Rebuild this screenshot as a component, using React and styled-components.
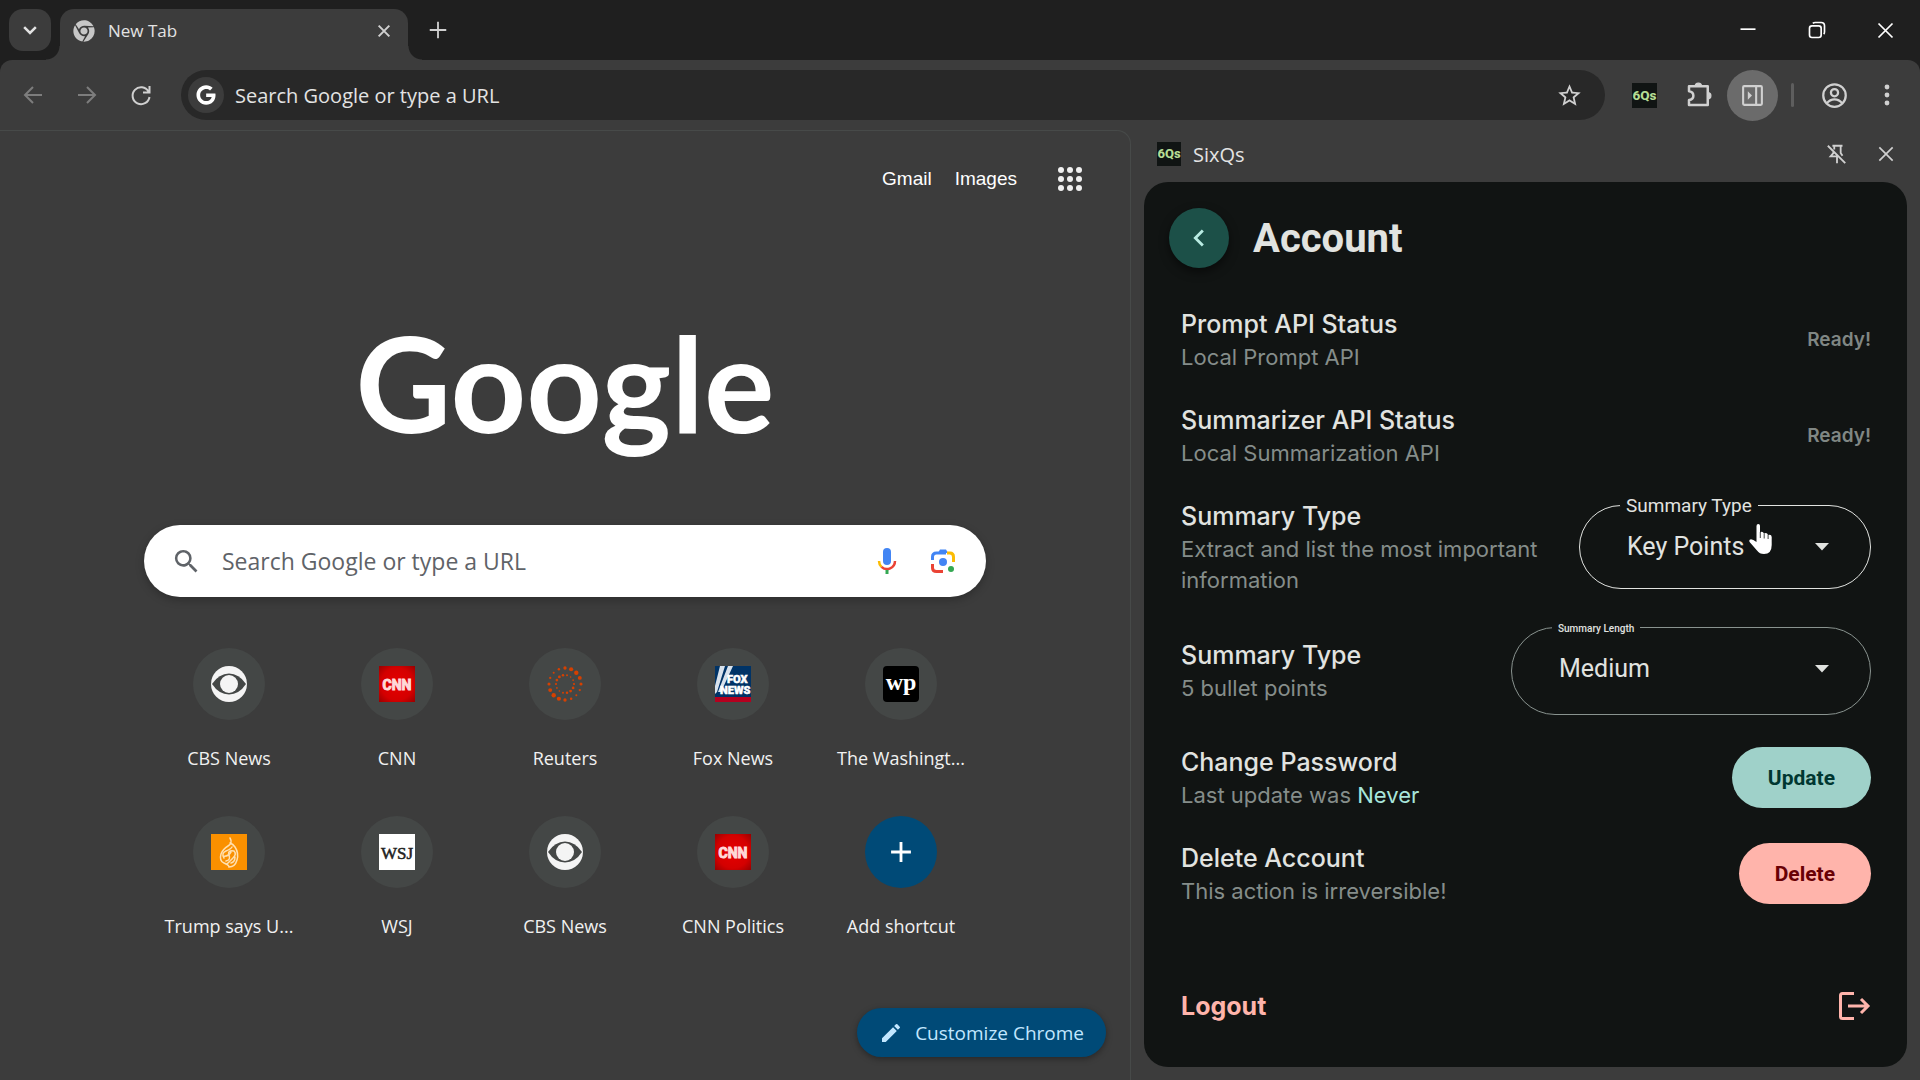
import React, { useState } from 'react';
import styled, { createGlobalStyle, css } from 'styled-components';
import { FaChrome, FaGoogle } from 'react-icons/fa';
import { MdAdd, MdEdit, MdSearch, MdStarOutline, MdChevronLeft } from 'react-icons/md';

const GlobalStyle = createGlobalStyle`
  * {
    box-sizing: border-box;
  }
  body {
    margin: 0;
    background: #3c3c3c;
    color: #e3e3e3;
    font-family: "Open Sans", "Noto Sans", sans-serif;
    font-size: 18px;
  }
  button, input, select {
    font: inherit;
    color: inherit;
  }
  svg {
    display: block;
    flex: none;
  }
`;

const Window = styled.div`
  display: flex;
  flex-direction: column;
  min-height: 100vh;
`;

/* ---------- tab strip ---------- */

const TabStrip = styled.div`
  display: flex;
  align-items: center;
  height: 60px;
  padding-left: 9px;
  background: #1f1f1f;
`;

const PlainButton = styled.button`
  display: flex;
  align-items: center;
  justify-content: center;
  flex: none;
  width: ${({ $width }) => $width || 48}px;
  height: ${({ $height }) => $height || 48}px;
  padding: 0;
  border: 0;
  border-radius: 50%;
  background: ${({ $active }) => ($active ? '#6b6b6b' : 'transparent')};
  color: ${({ $dim }) => ($dim ? '#7d7d7d' : '#d0d0d0')};
`;

const TabSearchButton = styled(PlainButton)`
  border-radius: 14px;
  background: #3c3c3c;
  color: #e3e3e3;
`;

const Tab = styled.div`
  position: relative;
  display: flex;
  align-items: center;
  align-self: flex-end;
  gap: 13px;
  width: 348px;
  height: 51px;
  margin-left: 9px;
  padding: 0 7px 8px 13px;
  border-radius: 14px 14px 0 0;
  background: #3c3c3c;
  color: #e3e3e3;

  &::before,
  &::after {
    content: "";
    position: absolute;
    bottom: 0;
    width: 14px;
    height: 14px;
  }
  &::before {
    right: 100%;
    background: radial-gradient(circle at 0 0, transparent 13px, #3c3c3c 14px);
  }
  &::after {
    left: 100%;
    background: radial-gradient(circle at 100% 0, transparent 13px, #3c3c3c 14px);
  }
`;

const TabTitle = styled.span`
  flex: 1;
  font-size: 17px;
`;

const NewTabButton = styled(PlainButton)`
  margin-left: 6px;
`;

const WindowControls = styled.div`
  display: flex;
  margin-left: auto;

  ${PlainButton} {
    color: #fff;
  }
`;

/* ---------- toolbar ---------- */

const ToolbarBack = styled.div`
  background: #1f1f1f;
`;

const Toolbar = styled.div`
  display: flex;
  align-items: center;
  height: 70px;
  padding: 0 8px 0 6px;
  border-radius: 12px 12px 0 0;
  background: #3c3c3c;
`;

const Omnibox = styled.div`
  display: flex;
  align-items: center;
  flex: 1;
  height: 50px;
  margin: 0 12px 0 13px;
  padding: 0 12px 0 7px;
  border-radius: 25px;
  background: #282828;
`;

const SiteBadge = styled.span`
  display: flex;
  align-items: center;
  justify-content: center;
  width: 36px;
  height: 36px;
  border-radius: 50%;
  background: #3c3c3c;
  color: #fff;
`;

const AddressInput = styled.input`
  flex: 1;
  min-width: 0;
  padding: 0 11px;
  border: 0;
  outline: 0;
  background: transparent;
  font-size: 20px;

  &::placeholder {
    color: #e3e3e3;
    opacity: 1;
  }
`;

const Divider = styled.span`
  width: 3px;
  height: 24px;
  margin: 0 16px 0 13px;
  border-radius: 2px;
  background: #5e5e5e;
`;

const MenuButton = styled(PlainButton)`
  margin-left: 4px;
`;

/* ---------- new tab page ---------- */

const Main = styled.div`
  display: flex;
  flex: 1;
`;

const Page = styled.main`
  display: flex;
  flex-direction: column;
  align-items: center;
  flex: 1;
  min-width: 0;
  padding: 24px 24px 23px;
  border: solid #474a49;
  border-width: 1px 1px 0 0;
  border-radius: 0 14px 0 0;
`;

const PageNav = styled.nav`
  display: flex;
  align-items: center;
  align-self: flex-end;
  gap: 23px;
  height: 48px;
  padding-right: 6px;
`;

const NavLink = styled.a`
  color: #fff;
  font-family: "Liberation Sans", Arial, sans-serif;
  font-size: 19px;
  text-decoration: none;
`;

const Logo = styled.svg`
  width: 440px;
  height: 190px;
  margin: 92px 0 40px;
`;

const SearchBox = styled.form`
  display: flex;
  align-items: center;
  width: 100%;
  max-width: 842px;
  height: 72px;
  padding: 0 19px 0 27px;
  border-radius: 36px;
  background: #fff;
  color: #5f6368;
  box-shadow: 0 3px 8px rgba(0, 0, 0, 0.25);
`;

const SearchInput = styled(AddressInput)`
  padding: 0 20px;
  font-size: 23px;

  &::placeholder {
    color: #5f6368;
  }
`;

const Shortcuts = styled.div`
  display: grid;
  grid-template-columns: repeat(5, 168px);
  grid-auto-rows: 168px;
  margin-top: 51px;
`;

const Shortcut = styled.a`
  display: flex;
  flex-direction: column;
  align-items: center;
  gap: 24px;
  color: #f1f1f1;
  font-size: 18px;
  line-height: 28px;
  text-decoration: none;
  white-space: nowrap;
`;

const ShortcutIcon = styled.span`
  display: flex;
  align-items: center;
  justify-content: center;
  width: 72px;
  height: 72px;
  border-radius: 50%;
  background: ${({ $accent }) => ($accent ? '#004a77' : '#444746')};
  color: #fff;
`;

const CustomizeButton = styled.button`
  display: flex;
  align-items: center;
  align-self: flex-end;
  gap: 12px;
  height: 49px;
  margin-top: auto;
  padding: 0 22px;
  border: 0;
  border-radius: 25px;
  background: #004a77;
  color: #c2e7ff;
  font-size: 19px;
  box-shadow: 0 2px 6px rgba(0, 0, 0, 0.35);
`;

/* ---------- side panel ---------- */

const SidePanel = styled.aside`
  display: flex;
  flex-direction: column;
  flex: none;
  width: 789px;
  padding: 0 13px 13px;
`;

const SideHeader = styled.header`
  display: flex;
  align-items: center;
  gap: 12px;
  height: 52px;
  padding: 0 2px 4px 13px;
`;

const SideTitle = styled.span`
  flex: 1;
  font-size: 20px;
  font-weight: 500;
`;

const Panel = styled.section`
  display: flex;
  flex-direction: column;
  flex: 1;
  padding: 26px 36px 31px 37px;
  border-radius: 24px;
  background: #111413;
  color: #e1e3e0;
  font-family: Inter, sans-serif;
`;

const PanelHeader = styled.div`
  display: flex;
  align-items: center;
  gap: 24px;
  margin: 0 0 38px -12px;
`;

const BackButton = styled(PlainButton)`
  background: #1c5048;
  color: #b9ece3;
  box-shadow: 0 4px 10px rgba(0, 0, 0, 0.5);
`;

const Heading = styled.h1`
  margin: 0;
  font-family: Roboto, sans-serif;
  font-size: 40px;
  font-weight: 700;
`;

const Settings = styled.div`
  display: flex;
  flex-direction: column;
  gap: 29px;
`;

const Row = styled.div`
  display: flex;
  align-items: center;
  justify-content: space-between;
  gap: 24px;
`;

const RowTitle = styled.h2`
  margin: 0;
  font-size: 25px;
  font-weight: 500;
  line-height: 36px;
`;

const RowText = styled.p`
  margin: 0;
  color: #858d8a;
  font-size: 22px;
  line-height: 31px;
`;

const Highlight = styled.span`
  color: #a8e6db;
`;

const Status = styled.span`
  color: #808784;
  font-size: 19px;
  font-weight: 600;
`;

const Field = styled.fieldset`
  position: relative;
  flex: none;
  width: ${({ $width }) => $width}px;
  height: ${({ $height }) => $height}px;
  margin: 0;
  padding: 0 0 0 40px;
  border: 1px solid ${({ $hover }) => ($hover ? '#e1e3e0' : '#89938f')};
  border-radius: 44px;
  font-family: Roboto, sans-serif;
`;

/* zero line height keeps the legend centred on the border */
const FieldLegend = styled.legend`
  padding: ${({ $small }) => ($small ? '4px 6px 0' : '0 6px')};
  line-height: 0;
  ${({ $small }) => css`
    font-size: ${$small ? 10 : 19}px;
    font-weight: ${$small ? 500 : 400};
  `}
`;

const FieldControl = styled.div`
  display: grid;
  align-items: center;
  height: 100%;
  padding-bottom: ${({ $small }) => ($small ? 6 : 0)}px;

  > * {
    grid-area: 1 / 1;
  }
  svg {
    justify-self: end;
    margin-right: 41px;
    pointer-events: none;
  }
`;

const Select = styled.select`
  width: 100%;
  height: 100%;
  padding: 0 60px 0 7px;
  border: 0;
  outline: 0;
  appearance: none;
  background: transparent;
  font-size: 25px;
  line-height: 36px;
`;

const Pointer = styled.svg`
  position: absolute;
  top: 18px;
  left: 169px;
  pointer-events: none;
`;

const ActionButton = styled.button`
  height: 61px;
  margin: 3px 0;
  padding: 0 36px;
  border: 0;
  border-radius: 31px;
  background: ${({ $danger }) => ($danger ? '#ffb4ab' : '#9fd1c9')};
  color: ${({ $danger }) => ($danger ? '#690005' : '#003731')};
  font-family: Roboto, sans-serif;
  font-size: 21px;
  font-weight: 700;
`;

const LogoutButton = styled.button`
  display: flex;
  align-items: center;
  justify-content: space-between;
  height: 60px;
  margin-top: auto;
  padding: 0;
  border: 0;
  background: transparent;
  color: #ffb4ab;
  font-size: 25px;
  font-weight: 700;
`;

/* ---------- drawings ---------- */

const StrokeIcon = ({ size = 24, width = 2, children }) => (
  <svg width={size} height={size} viewBox="0 0 24 24" fill="none" stroke="currentColor" strokeWidth={width} aria-hidden="true">
    {children}
  </svg>
);

const Cross = ({ size = 20, width = 2 }) => (
  <StrokeIcon size={size} width={width}>
    <path d="M4 4 20 20M20 4 4 20" />
  </StrokeIcon>
);

const SixQsIcon = ({ size }) => (
  <svg width={size} height={size} viewBox="0 0 24 24" aria-hidden="true">
    <rect width="24" height="24" fill="#101413" />
    <text x="12" y="16" textAnchor="middle" fill="#b5dc94" fontFamily="Roboto, sans-serif" fontWeight="800" fontSize="13">6Qs</text>
  </svg>
);

const CbsIcon = () => (
  <svg width="36" height="36" viewBox="0 0 36 36" aria-hidden="true">
    <circle cx="18" cy="18" r="18" fill="#f4f4f4" />
    <path d="M1 18Q8 7.500 18 7.500T35 18Q28 28.500 18 28.500T1 18Z" fill="#444746" />
    <circle cx="18" cy="18" r="9" fill="#f4f4f4" />
  </svg>
);

const CnnIcon = () => (
  <svg width="36" height="36" viewBox="0 0 36 36" aria-hidden="true">
    <defs>
      <radialGradient id="cnn-red" r="0.75">
        <stop offset="0" stopColor="#e60000" />
        <stop offset="0.6" stopColor="#d40000" />
        <stop offset="1" stopColor="#8e0000" />
      </radialGradient>
    </defs>
    <rect width="36" height="36" fill="url(#cnn-red)" />
    <text x="18" y="24" textAnchor="middle" fill="#ffd9d9" stroke="#ffd9d9" strokeWidth="1" fontFamily="Roboto, sans-serif" fontWeight="700" fontSize="14">CNN</text>
  </svg>
);

const ring = (count, radius, min, max, phase) =>
  Array.from({ length: count }).map((_, i) => {
    const angle = (i / count) * Math.PI * 2;
    const weight = (Math.cos((angle - phase) * 2) + 1) / 2;
    return (
      <circle
        key={`${radius}-${i}`}
        cx={18 + Math.cos(angle) * radius}
        cy={18 + Math.sin(angle) * radius}
        r={min + (max - min) * weight}
      />
    );
  });

const ReutersIcon = () => (
  <svg width="36" height="36" viewBox="0 0 36 36" fill="#d64000" aria-hidden="true">
    {ring(16, 16, 1, 2.2, 2.3)}
    {ring(14, 9, 0.8, 1.4, 0.8)}
  </svg>
);

const FoxIcon = () => (
  <svg width="36" height="36" viewBox="0 0 36 36" aria-hidden="true">
    <rect width="36" height="36" fill="#003366" />
    <path d="M5 0H10L2 26 0 28V20ZM13 0H18L6 26H3Z" fill="#d8e2ec" />
    <rect y="31" width="36" height="5" fill="#b5001f" />
    <g fill="#fff" stroke="#fff" fontFamily="Roboto, sans-serif" fontWeight="900" strokeWidth="0.500">
      <text x="12" y="17" fontSize="11">FOX</text>
      <text x="5" y="28" fontSize="11">NEWS</text>
    </g>
  </svg>
);

const WpIcon = () => (
  <svg width="36" height="36" viewBox="0 0 36 36" aria-hidden="true">
    <rect width="36" height="36" rx="4" fill="#000" />
    <text x="18" y="24" textAnchor="middle" fill="#fff" fontFamily="Liberation Serif, serif" fontWeight="700" fontSize="24">wp</text>
  </svg>
);

const AlJazeeraIcon = () => (
  <svg width="36" height="36" viewBox="0 0 36 36" aria-hidden="true">
    <rect width="36" height="36" fill="#fa9000" />
    <g fill="none" stroke="#ffe0b0" strokeWidth="1.500" strokeLinecap="round">
      <path d="M19 4Q22 9 17 12T10 20Q8 27 13 29T18 33Q24 33 26 26T24 13Q22 10 19 9" />
      <path d="M13 24Q10 19 15 17T21 13M15 27Q20 26 18 21T23 17Q26 20 22 24T16 30M12 22Q17 23 20 18M20 29Q24 28 24 23" />
    </g>
  </svg>
);

const WsjIcon = () => (
  <svg width="36" height="36" viewBox="0 0 36 36" aria-hidden="true">
    <rect width="36" height="36" fill="#fff" />
    <text x="18" y="25" textAnchor="middle" fill="#222" stroke="#222" strokeWidth="0.500" fontFamily="Liberation Serif, serif" fontSize="17">WSJ</text>
  </svg>
);

const MicIcon = () => (
  <svg width="30" height="30" viewBox="0 0 30 30" fill="none" aria-hidden="true">
    <rect x="11" y="2" width="8" height="17" rx="4" fill="#4285f4" />
    <path d="M7 15A8 8 0 0 0 9.500 20.800" stroke="#fbbc04" strokeWidth="2.500" />
    <path d="M9.500 20.800A8 8 0 0 0 23 15" stroke="#ea4335" strokeWidth="2.500" />
    <path d="M15 24V28" stroke="#34a853" strokeWidth="3" />
  </svg>
);

const LensIcon = () => (
  <svg width="26" height="26" viewBox="0 0 26 26" fill="none" strokeWidth="3" aria-hidden="true">
    <path d="M2.500 12V9Q2.500 5 6.500 5H16" stroke="#4285f4" />
    <path d="M8 5 10 1.500H16L18 5Z" fill="#4285f4" />
    <path d="M17 5H20Q23.500 5 23.500 9V14" stroke="#fbbc04" />
    <path d="M2.500 16V20Q2.500 23.500 6.500 23.500H13" stroke="#ea4335" />
    <circle cx="13" cy="14" r="4" fill="#4285f4" />
    <circle cx="21" cy="21" r="3" fill="#34a853" />
  </svg>
);

const AppsIcon = () => (
  <svg width="25" height="25" viewBox="0 0 25 25" fill="#f1f1f1" aria-hidden="true">
    {[3, 12, 21].map((cy) => [3, 12, 21].map((cx) => <circle key={`${cx}-${cy}`} cx={cx} cy={cy} r="3" />))}
  </svg>
);

const DropArrow = () => (
  <svg width="14" height="8" viewBox="0 0 14 8" fill="currentColor" aria-hidden="true">
    <path d="M0 0H14L7 7.500Z" />
  </svg>
);

const HandPointer = () => (
  <Pointer width="24" height="31" viewBox="0 0 24 31" aria-hidden="true">
    <path
      d="M7.500 2Q7.500 0 9.300 0T11 2V8.500Q13.500 6.500 15 9.500 18 8 19 11 22.500 10 22.700 13V21Q22.700 30 15 30 10.500 30 8 26.500L.6 18Q-.5 15.500 2 15.300 4 15.300 7.500 18Z"
      fill="#fff"
    />
    <path d="M11.300 8V14M15.200 9.500V14.500M19.100 11V15" stroke="#111413" strokeWidth="0.800" />
  </Pointer>
);

const shortcuts = [
  { id: 1, name: 'CBS News', icon: <CbsIcon /> },
  { id: 2, name: 'CNN', icon: <CnnIcon /> },
  { id: 3, name: 'Reuters', icon: <ReutersIcon /> },
  { id: 4, name: 'Fox News', icon: <FoxIcon /> },
  { id: 5, name: 'The Washingt...', icon: <WpIcon /> },
  { id: 6, name: 'Trump says U...', icon: <AlJazeeraIcon /> },
  { id: 7, name: 'WSJ', icon: <WsjIcon /> },
  { id: 8, name: 'CBS News', icon: <CbsIcon /> },
  { id: 9, name: 'CNN Politics', icon: <CnnIcon /> },
  { id: 10, name: 'Add shortcut', icon: <MdAdd size={34} />, accent: true },
];

const SettingRow = ({ title, text, children }) => (
  <Row>
    <div>
      <RowTitle>{title}</RowTitle>
      <RowText>{text}</RowText>
    </div>
    {children}
  </Row>
);

const SelectField = ({ id, label, options, value, onChange, width, height, small, hover }) => (
  <Field $width={width} $height={height} $hover={hover}>
    <FieldLegend $small={small}>
      <label htmlFor={id}>{label}</label>
    </FieldLegend>
    <FieldControl $small={small}>
      <Select id={id} value={value} onChange={(e) => onChange(e.target.value)}>
        {options.map((option) => <option key={option}>{option}</option>)}
      </Select>
      <DropArrow />
    </FieldControl>
    {hover && <HandPointer />}
  </Field>
);

const Browser = () => (
  <>
    <TabStrip>
      <TabSearchButton $width={42} $height={42} aria-label="Search tabs">
        <StrokeIcon size={20} width={3}><path d="M5 8.500 12 15.500 19 8.500" /></StrokeIcon>
      </TabSearchButton>
      <Tab>
        <FaChrome size={22} color="#c7c7c7" />
        <TabTitle>New Tab</TabTitle>
        <PlainButton $width={34} $height={34} aria-label="Close tab"><Cross size={16} width={3} /></PlainButton>
      </Tab>
      <NewTabButton aria-label="New tab">
        <StrokeIcon size={22} width={2}><path d="M12 3V21M3 12H21" /></StrokeIcon>
      </NewTabButton>
      <WindowControls>
        <PlainButton $width={69} aria-label="Minimize">
          <StrokeIcon size={20}><path d="M3 11H21" /></StrokeIcon>
        </PlainButton>
        <PlainButton $width={69} aria-label="Restore">
          <StrokeIcon size={20} width={2}>
            <rect x="3" y="7" width="14" height="14" rx="3" />
            <path d="M7 4Q8 3 10 3H17Q21 3 21 7V14Q21 16 20 17" />
          </StrokeIcon>
        </PlainButton>
        <PlainButton $width={69} aria-label="Close window"><Cross size={21} /></PlainButton>
      </WindowControls>
    </TabStrip>
    <ToolbarBack>
      <Toolbar>
        <PlainButton $width={54} $dim aria-label="Back">
          <StrokeIcon><path d="M12 4 4 12 12 20M4 12H21" /></StrokeIcon>
        </PlainButton>
        <PlainButton $width={54} $dim aria-label="Forward">
          <StrokeIcon><path d="M12 4 20 12 12 20M20 12H3" /></StrokeIcon>
        </PlainButton>
        <PlainButton $width={54} aria-label="Reload">
          <StrokeIcon width={2}><path d="M19.500 8.500A8.500 8.500 0 1 0 20.500 14M20.500 3V9.500H14" /></StrokeIcon>
        </PlainButton>
        <Omnibox>
          <SiteBadge><FaGoogle size={20} /></SiteBadge>
          <AddressInput aria-label="Address bar" placeholder="Search Google or type a URL" />
          <PlainButton aria-label="Bookmark this tab"><MdStarOutline size={27} /></PlainButton>
        </Omnibox>
        <PlainButton $width={54} aria-label="SixQs extension"><SixQsIcon size={25} /></PlainButton>
        <PlainButton $width={56} aria-label="Extensions">
          <StrokeIcon size={30}>
            <path d="M4 5H19V20H4V16Q7.500 15.500 7.500 12.500T4 9Z" strokeLinejoin="round" />
            <path d="M9 5A2.500 2.500 0 0 1 14 5ZM19 10A2.500 2.500 0 0 1 19 15Z" fill="currentColor" strokeWidth="1" />
          </StrokeIcon>
        </PlainButton>
        <PlainButton $width={51} $height={51} $active aria-label="Side panel">
          <StrokeIcon size={25}>
            <rect x="3" y="3" width="18" height="18" rx="1" />
            <path d="M15.500 3V21" />
            <path d="M7.500 8 11.500 12 7.500 16Z" fill="currentColor" stroke="none" />
          </StrokeIcon>
        </PlainButton>
        <Divider />
        <PlainButton aria-label="Profile">
          <StrokeIcon size={27}>
            <circle cx="12" cy="12" r="10" />
            <circle cx="12" cy="9.500" r="3.200" />
            <path d="M5 19Q8 15.500 12 15.500T19 19" />
          </StrokeIcon>
        </PlainButton>
        <MenuButton $width={50} aria-label="Menu">
          <svg width="6" height="22" viewBox="0 0 6 22" fill="currentColor" aria-hidden="true">
            <circle cx="3" cy="3" r="2.400" />
            <circle cx="3" cy="11" r="2.400" />
            <circle cx="3" cy="19" r="2.400" />
          </svg>
        </MenuButton>
      </Toolbar>
    </ToolbarBack>
  </>
);

const NewTabPage = () => (
  <Page>
    <PageNav>
      <NavLink href="#gmail">Gmail</NavLink>
      <NavLink href="#images">Images</NavLink>
      <PlainButton $width={60} aria-label="Google apps"><AppsIcon /></PlainButton>
    </PageNav>
    <Logo viewBox="0 0 440 190" role="img" aria-label="Google">
      <text x="220" y="138" textAnchor="middle" fill="#fff" fontFamily="Lato, sans-serif" fontWeight="700" fontSize="132">Google</text>
    </Logo>
    <SearchBox onSubmit={(e) => e.preventDefault()}>
      <MdSearch size={31} />
      <SearchInput aria-label="Search" placeholder="Search Google or type a URL" />
      <PlainButton type="button" $width={64} aria-label="Search by voice"><MicIcon /></PlainButton>
      <PlainButton type="button" aria-label="Search by image"><LensIcon /></PlainButton>
    </SearchBox>
    <Shortcuts>
      {shortcuts.map(({ id, name, icon, accent }) => (
        <Shortcut key={id} href="#shortcut">
          <ShortcutIcon $accent={accent}>{icon}</ShortcutIcon>
          {name}
        </Shortcut>
      ))}
    </Shortcuts>
    <CustomizeButton>
      <MdEdit size={24} />
      Customize Chrome
    </CustomizeButton>
  </Page>
);

const AccountPanel = () => {
  const [summaryType, setSummaryType] = useState('Key Points');
  const [summaryLength, setSummaryLength] = useState('Medium');

  return (
    <SidePanel>
      <SideHeader>
        <SixQsIcon size={24} />
        <SideTitle>SixQs</SideTitle>
        <PlainButton $width={36} $height={36} aria-label="Unpin side panel">
          <StrokeIcon size={22}>
            <path d="M7 3H18M9 4V7M16 3V11L18 14M8 9V11L5 14.500H13M12 14V22M2 3 21 22" />
          </StrokeIcon>
        </PlainButton>
        <PlainButton $width={38} $height={36} aria-label="Close side panel"><Cross /></PlainButton>
      </SideHeader>
      <Panel>
        <PanelHeader>
          <BackButton $width={60} $height={60} aria-label="Go back"><MdChevronLeft size={34} /></BackButton>
          <Heading>Account</Heading>
        </PanelHeader>
        <Settings>
          <SettingRow title="Prompt API Status" text="Local Prompt API">
            <Status>Ready!</Status>
          </SettingRow>
          <SettingRow title="Summarizer API Status" text="Local Summarization API">
            <Status>Ready!</Status>
          </SettingRow>
          <SettingRow title="Summary Type" text="Extract and list the most important information">
            <SelectField
              id="summary-type"
              label="Summary Type"
              options={['Key Points', 'Headline', 'Teaser', 'TL;DR']}
              value={summaryType}
              onChange={setSummaryType}
              width={292}
              height={84}
              hover
            />
          </SettingRow>
          <SettingRow title="Summary Type" text="5 bullet points">
            <SelectField
              id="summary-length"
              label="Summary Length"
              options={['Short', 'Medium', 'Long']}
              value={summaryLength}
              onChange={setSummaryLength}
              width={360}
              height={90}
              small
            />
          </SettingRow>
          <SettingRow title="Change Password" text={<>Last update was <Highlight>Never</Highlight></>}>
            <ActionButton>Update</ActionButton>
          </SettingRow>
          <SettingRow title="Delete Account" text="This action is irreversible!">
            <ActionButton $danger>Delete</ActionButton>
          </SettingRow>
        </Settings>
        <LogoutButton>
          Logout
          <svg width="34" height="32" viewBox="0 0 34 32" fill="none" stroke="currentColor" strokeWidth="3" aria-hidden="true">
            <path d="M17 3.500H5.500Q3.500 3.500 3.500 5.500V26.500Q3.500 28.500 5.500 28.500H17" />
            <path d="M11 16H31M24 9 31 16 24 23" />
          </svg>
        </LogoutButton>
      </Panel>
    </SidePanel>
  );
};

const App = () => (
  <Window>
    <GlobalStyle />
    <Browser />
    <Main>
      <NewTabPage />
      <AccountPanel />
    </Main>
  </Window>
);

export default App;
